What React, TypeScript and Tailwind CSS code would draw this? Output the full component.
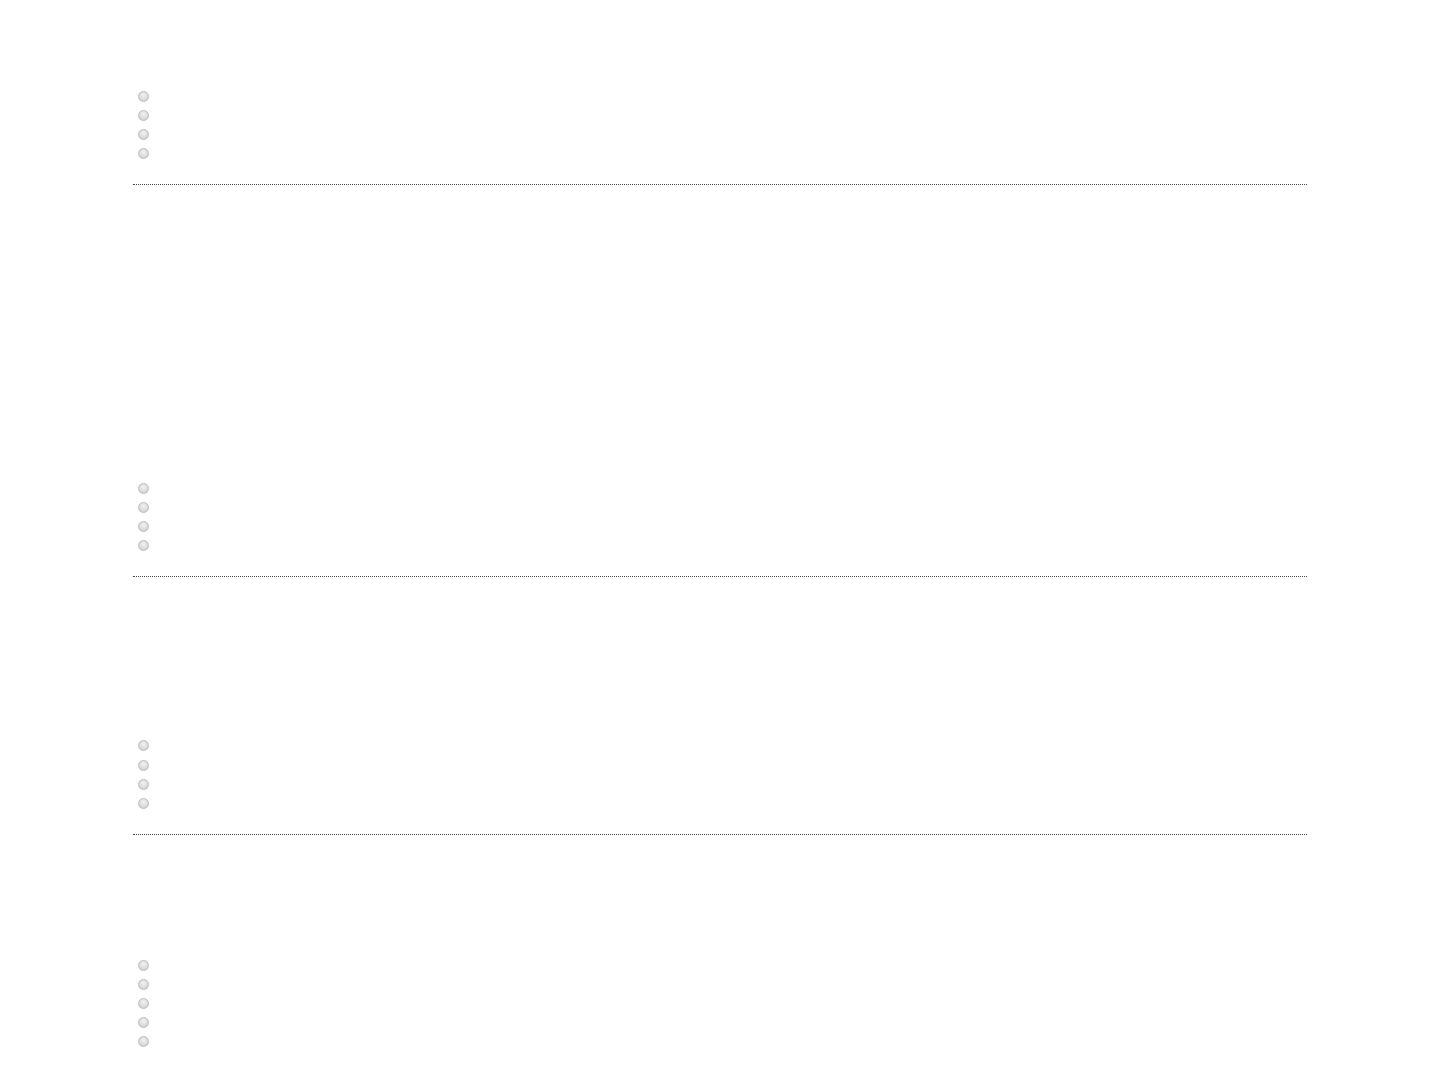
import React from "react";

function Radio({ tall }: { tall?: boolean }) {
  return (
    <div className={`flex items-center pl-[5px] ${tall ? "h-[20px] pb-[1px]" : "h-[19px]"}`}>
      <span className="block h-[11px] w-[11px] rounded-full border border-[#bcbcbc] bg-[radial-gradient(circle_at_50%_35%,#f2f2f2_0%,#dcdcdc_55%,#c8c8c8_100%)]" />
    </div>
  );
}

function Group({ count, mt, tallFirst }: { count: number; mt: string; tallFirst?: boolean }) {
  return (
    <div className={mt}>
      {Array.from({ length: count }).map((_, i) => (
        <Radio key={i} tall={tallFirst && i === 0} />
      ))}
    </div>
  );
}

export default function App() {
  return (
    <div className="min-h-[1080px] w-full bg-white font-['Liberation_Sans',sans-serif]">
      <div className="mx-auto w-[1174px] pt-[87px]">
        <Group count={4} mt="mt-0" />
        <div className="mt-[21px] border-t border-dotted border-[#444]" />
        <Group count={4} mt="mt-[294px]" />
        <div className="mt-[21px] border-t border-dotted border-[#444]" />
        <Group count={4} mt="mt-[159px]" tallFirst />
        <div className="mt-[21px] border-t border-dotted border-[#444]" />
        <Group count={5} mt="mt-[121px]" />
      </div>
    </div>
  );
}
